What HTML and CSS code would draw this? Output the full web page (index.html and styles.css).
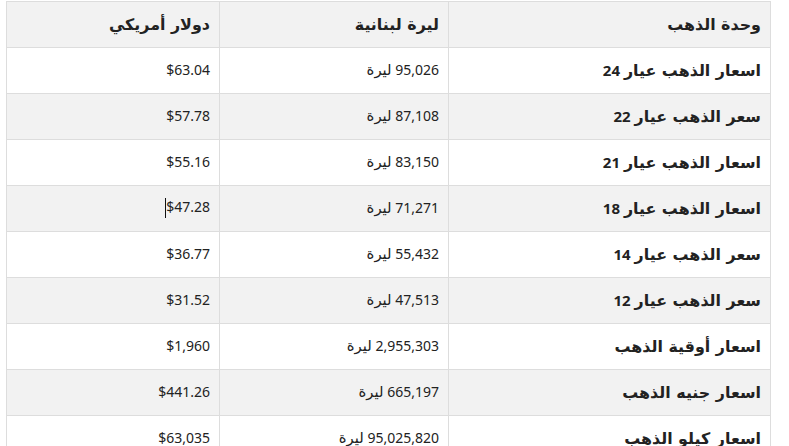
FILE: index.html
```html
<!DOCTYPE html>
<html lang="ar" dir="rtl">
<head>
<meta charset="utf-8">
<link rel="stylesheet" href="styles.css">
</head>
<body>
<div class="wrap">
<table class="gold">
<thead>
<tr><th class="c-unit"><span class="ar">وحدة الذهب</span></th><th class="c-lbp"><span class="ar">ليرة لبنانية</span></th><th class="c-usd"><span class="ar">دولار أمريكي</span></th></tr>
</thead>
<tbody>
<tr><td class="unit"><span class="ar">اسعار الذهب عيار</span> 24</td><td>95,026 <span class="ar">ليرة</span></td><td>$63.04</td></tr>
<tr><td class="unit"><span class="ar">سعر الذهب عيار</span> 22</td><td>87,108 <span class="ar">ليرة</span></td><td>$57.78</td></tr>
<tr><td class="unit"><span class="ar">اسعار الذهب عيار</span> 21</td><td>83,150 <span class="ar">ليرة</span></td><td>$55.16</td></tr>
<tr><td class="unit"><span class="ar">اسعار الذهب عيار</span> 18</td><td>71,271 <span class="ar">ليرة</span></td><td>$47.28<span class="caret"></span></td></tr>
<tr><td class="unit"><span class="ar">سعر الذهب عيار</span> 14</td><td>55,432 <span class="ar">ليرة</span></td><td>$36.77</td></tr>
<tr><td class="unit"><span class="ar">سعر الذهب عيار</span> 12</td><td>47,513 <span class="ar">ليرة</span></td><td>$31.52</td></tr>
<tr><td class="unit"><span class="ar">اسعار أوقية الذهب</span></td><td>2,955,303 <span class="ar">ليرة</span></td><td>$1,960</td></tr>
<tr><td class="unit"><span class="ar">اسعار جنيه الذهب</span></td><td>665,197 <span class="ar">ليرة</span></td><td>$441.26</td></tr>
<tr><td class="unit"><span class="ar">اسعار كيلو الذهب</span></td><td>95,025,820 <span class="ar">ليرة</span></td><td>$63,035</td></tr>
</tbody>
</table>
</div>
</body>
</html>
```
FILE: styles.css
```css
html, body {
  margin: 0;
  padding: 0;
  background: #ffffff;
}
.wrap {
  padding: 1px 18px 0 7px;
}
.gold {
  width: 764px;
  border-collapse: collapse;
  direction: rtl;
  font-family: "Noto Sans", "DejaVu Sans", sans-serif;
  font-size: 14px;
  line-height: 20px;
  color: #222222;
  table-layout: fixed;
}
.gold th, .gold td {
  border: 1px solid #dddddd;
  height: 46px;
  padding: 0 9px 2px 8px;
  text-align: right;
  vertical-align: middle;
  box-sizing: border-box;
}
.gold th {
  background: #f2f2f2;
  font-weight: bold;
  font-size: 15px;
}
.c-unit { width: 322px; }
.c-lbp { width: 229px; }
.c-usd { width: 213px; }
.gold td.unit {
  font-weight: bold;
  font-size: 15px;
}
.ar {
  font-family: "DejaVu Sans", sans-serif;
  font-size: 1.06em;
  line-height: 1;
}
.gold tbody tr:nth-child(even) td {
  background: #f2f2f2;
}
.caret {
  display: inline-block;
  width: 1px;
  height: 20px;
  margin-left: 1px;
  background: #111111;
  vertical-align: middle;
}
```
